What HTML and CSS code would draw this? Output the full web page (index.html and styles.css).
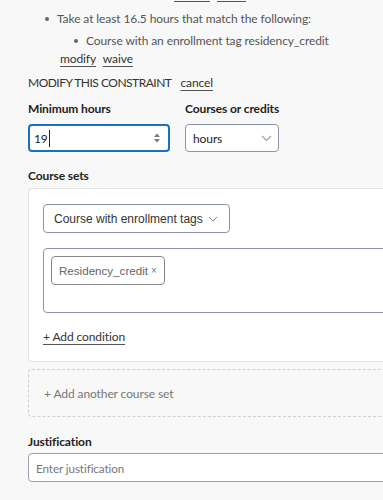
FILE: index.html
```html
<!DOCTYPE html>
<html lang="en">
<head>
  <meta charset="UTF-8">
  <title>Modify constraint</title>
  <meta name="viewport" content="width=device-width, initial-scale=1.0">
  <link rel="stylesheet" href="styles.css">
</head>
<body>

  <div class="page">
    <div class="prev-links">
      <span class="stub" style="width: 36px;"></span>
      <span class="stub" style="width: 29px;"></span>
    </div>

    <ul class="rules">
      <li>Take at least 16.5 hours that match the following:
        <ul class="sub">
          <li>Course with an enrollment tag residency_credit</li>
        </ul>
      </li>
    </ul>
    <div class="actions">
      <span class="link">modify</span>
      <span class="link">waive</span>
    </div>

    <div class="modify-head">
      <span class="caps">MODIFY THIS CONSTRAINT</span> <span class="link">cancel</span>
    </div>

    <div class="row">
      <div class="field">
        <label>Minimum hours</label>
        <div class="num-input">
          <span>19</span><span class="caret"></span>
          <svg class="spin" width="8" height="12" viewBox="0 0 8 12">
            <path d="M4 1.5 L7 5 L1 5 Z" fill="#7a7a7a"/>
            <path d="M4 10.5 L7 7 L1 7 Z" fill="#7a7a7a"/>
          </svg>
        </div>
      </div>
      <div class="field">
        <label>Courses or credits</label>
        <div class="select small">
          <span>hours</span>
          <svg width="11" height="7" viewBox="0 0 11 7"><path d="M1 1 L5.5 5.5 L10 1" fill="none" stroke="#a0a0a0" stroke-width="1.2"/></svg>
        </div>
      </div>
    </div>

    <label>Course sets</label>
    <div class="card">
      <div class="select tags-type">
        <span>Course with enrollment tags</span>
        <svg width="10" height="6" viewBox="0 0 10 6"><path d="M1 1 L5 5 L9 1" fill="none" stroke="#8a8a8a" stroke-width="1"/></svg>
      </div>
      <div class="tag-box">
        <span class="tag">Residency_credit <span class="x">×</span></span>
      </div>
      <span class="link add-cond">+ Add condition</span>
    </div>

    <div class="add-set">+ Add another course set</div>

    <label>Justification</label>
    <div class="text-input">Enter justification</div>
  </div>

</body>
</html>
```

FILE: styles.css
```css
* {
  margin: 0;
  padding: 0;
  box-sizing: border-box;
}

html, body {
  width: 100%;
  height: 100%;
  background-color: #f8f8f8;
  font-family: Lato, "Open Sans", sans-serif;
  font-size: 12px;
  letter-spacing: -0.1px;
  color: #222;
  overflow: hidden;
}

.page {
  padding-left: 28px;
  width: 440px;
}

.link {
  color: #333;
  text-decoration: underline;
  text-underline-offset: 3px;
  text-decoration-color: #555;
  cursor: pointer;
}

.prev-links {
  display: flex;
  gap: 7px;
  padding-left: 146px;
  height: 8px;
  align-items: flex-start;
}

.stub {
  display: block;
  height: 2px;
  border-bottom: 1px solid #555;
}

.rules {
  list-style: none;
  color: #555;
  padding-left: 29px;
}

.rules li {
  position: relative;
  line-height: 22px;
}

.rules li::before {
  content: "";
  position: absolute;
  left: -12px;
  top: 9px;
  width: 4px;
  height: 4px;
  border-radius: 50%;
  background: #666;
}

.sub {
  list-style: none;
  padding-left: 29px;
}

.actions {
  padding-left: 32px;
  line-height: 18px;
  margin-top: -2px;
}

.actions .link {
  margin-right: 4px;
}

.modify-head {
  margin-top: 6px;
  line-height: 18px;
  color: #333;
}

.caps {
  letter-spacing: -0.5px;
}

.modify-head .link {
  margin-left: 6px;
}

label {
  display: block;
  font-weight: 700;
  color: #222;
  line-height: 18px;
}

.row {
  display: flex;
  gap: 15px;
  margin-top: 8px;
}

.field label {
  margin-bottom: 6px;
}

.num-input {
  width: 142px;
  height: 28px;
  border: 2px solid #1a6fc2;
  border-radius: 4px;
  background: #fff;
  display: flex;
  align-items: center;
  padding: 0 7px 0 4px;
  color: #222;
}

.caret {
  width: 1px;
  height: 17px;
  background: #222;
  margin-left: 1px;
}

.spin {
  margin-left: auto;
}

.select {
  background: #fff;
  border: 1px solid #8d96a8;
  border-radius: 4px;
  display: flex;
  align-items: center;
  justify-content: space-between;
  white-space: nowrap;
}

.select.small {
  width: 94px;
  height: 28px;
  padding: 0 6px 0 7px;
}

.row + label {
  margin-top: 15px;
}

.card {
  margin-top: 3px;
  background: #fff;
  border: 1px solid #e2e2e2;
  border-radius: 4px;
  padding: 15px 14px 15px 14px;
}

.tags-type {
  width: 187px;
  height: 29px;
  padding: 0 11px 0 10px;
  font-family: "Liberation Sans", Arial, sans-serif;
  font-size: 12px;
  letter-spacing: 0;
  color: #333;
}

.tag-box {
  margin-top: 15px;
  height: 65px;
  border: 1px solid #8d96a8;
  border-radius: 4px;
  padding: 7px 7px;
}

.tag {
  display: inline-flex;
  align-items: center;
  height: 29px;
  padding: 0 7px;
  border: 1px solid #8a8a8a;
  border-radius: 4px;
  font-family: "Liberation Sans", Arial, sans-serif;
  font-size: 11.6px;
  letter-spacing: 0;
  color: #666;
}

.tag .x {
  font-size: 10px;
  margin-left: 3px;
  color: #777;
}

.add-cond {
  display: inline-block;
  margin-top: 15px;
  line-height: 18px;
}

.add-set {
  margin-top: 7px;
  height: 48px;
  border: 1px dashed #cfcfcf;
  border-radius: 4px;
  display: flex;
  align-items: center;
  padding-left: 15px;
  color: #777;
}

.add-set + label {
  margin-top: 16px;
}

.text-input {
  margin-top: 2px;
  height: 29px;
  background: #fff;
  border: 1px solid #9aa2b2;
  border-radius: 4px;
  display: flex;
  align-items: center;
  padding-left: 7px;
  color: #777;
  font-size: 11.7px;
}
```
